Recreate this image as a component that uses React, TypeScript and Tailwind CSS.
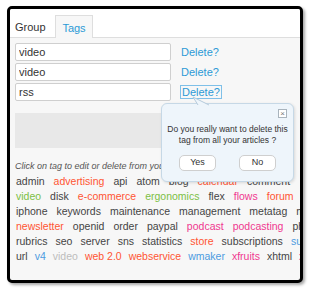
import React from "react";

type Tag = { label: string; color: string };

const G = "#444444";
const O = "#ff5533";
const GR = "#7cbf45";
const P = "#f0388f";
const B = "#4d9be0";
const L = "#bdbdbd";

// row gaps differ a little so the words land where the screenshot has them
const rows: { gap: string; tags: Tag[] }[] = [
    {
        gap: "gap-x-[9px]",
        tags: [
            { label: "admin", color: G },
            { label: "advertising", color: O },
            { label: "api", color: G },
            { label: "atom", color: G },
            { label: "blog", color: G },
            { label: "calendar", color: O },
            { label: "comment", color: G },
        ],
    },
    {
        gap: "gap-x-[9px]",
        tags: [
            { label: "video", color: GR },
            { label: "disk", color: G },
            { label: "e-commerce", color: O },
            { label: "ergonomics", color: GR },
            { label: "flex", color: G },
            { label: "flows", color: P },
            { label: "forum", color: O },
        ],
    },
    {
        gap: "gap-x-[9px]",
        tags: [
            { label: "iphone", color: G },
            { label: "keywords", color: G },
            { label: "maintenance", color: G },
            { label: "management", color: G },
            { label: "metatag", color: G },
            { label: "mobile", color: G },
        ],
    },
    {
        gap: "gap-x-[9px]",
        tags: [
            { label: "newsletter", color: O },
            { label: "openid", color: G },
            { label: "order", color: G },
            { label: "paypal", color: G },
            { label: "podcast", color: P },
            { label: "podcasting", color: P },
            { label: "php", color: G },
        ],
    },
    {
        gap: "gap-x-[8px]",
        tags: [
            { label: "rubrics", color: G },
            { label: "seo", color: G },
            { label: "server", color: G },
            { label: "sns", color: G },
            { label: "statistics", color: G },
            { label: "store", color: O },
            { label: "subscriptions", color: G },
            { label: "support", color: B },
        ],
    },
    {
        gap: "gap-x-[7px]",
        tags: [
            { label: "url", color: G },
            { label: "v4", color: B },
            { label: "video", color: L },
            { label: "web 2.0", color: O },
            { label: "webservice", color: O },
            { label: "wmaker", color: B },
            { label: "xfruits", color: P },
            { label: "xhtml", color: G },
            { label: "xml", color: P },
        ],
    },
];

function TagRow({ left }: { left: string }) {
    return (
        <div className="flex items-center gap-[10px] h-[20px]">
            <input
                readOnly
                defaultValue={left}
                className="w-[156px] h-[18px] bg-white border border-[#cfcfcf] rounded-[2px] pl-[3px] text-[11px] text-[#333] outline-none"
            />
            <span className="text-[11px] text-[#2c9ad6]">Delete?</span>
        </div>
    );
}

export default function App() {
    return (
        <div
            className="w-[310px] h-[291px] bg-white pt-[6px] pl-[7px]"
            style={{ fontFamily: '"Liberation Sans", Arial, sans-serif' }}
        >
            <div className="relative w-[296px] h-[277px] border-[3px] border-black rounded-[5px] overflow-hidden bg-[#f7f7f7] shadow-[2px_2px_3px_rgba(0,0,0,0.35)]">
                {/* tabs */}
                <div className="h-[29px] bg-white flex items-end pl-[5px] border-b border-[#dedede]">
                    <div className="w-[40px] h-[22px] flex items-center pt-[2px] text-[11px] text-[#333]">
                        Group
                    </div>
                    <div className="w-[38px] h-[23px] -mb-px bg-[#f7f7f7] border border-b-0 border-[#dedede] flex items-center justify-center pt-[2px] text-[11px] text-[#2c9ad6]">
                        Tags
                    </div>
                </div>

                <div className="pl-[5px] pt-[4px]">
                    <div className="flex flex-col">
                        <TagRow left="video" />
                        <TagRow left="video" />
                        <div className="flex items-center gap-[9px] h-[20px]">
                            <input
                                readOnly
                                defaultValue="rss"
                                className="w-[156px] h-[18px] bg-white border border-[#cfcfcf] rounded-[2px] pl-[3px] text-[11px] text-[#333] outline-none"
                            />
                            <span className="text-[11px] leading-[12px] text-[#2c9ad6] border border-[#7fc0e8] px-px">
                                Delete?
                            </span>
                        </div>
                    </div>

                    <div className="mt-[11px] w-[276px] h-[35px] bg-[#e8e8e8]" />

                    <p className="mt-[12px] text-[9px] leading-[12px] italic text-[#555] whitespace-nowrap">
                        Click on tag to edit or delete from your articles
                    </p>

                    <div className="mt-[2px] flex flex-col pl-px">
                        {rows.map((row, i) => (
                            <div key={i} className={`flex ${row.gap} whitespace-nowrap text-[10.5px] leading-[15px]`}>
                                {row.tags.map((t) => (
                                    <span key={t.label + i} style={{ color: t.color }}>
                                        {t.label}
                                    </span>
                                ))}
                            </div>
                        ))}
                    </div>
                </div>

                {/* confirm popup */}
                <div className="absolute left-[151px] top-[94px] w-[133px] h-[79px] bg-[#eef5fb] border border-[#c6d8e6] rounded-[6px] shadow-[1px_1px_3px_rgba(0,0,0,0.12)]">
                    <svg className="absolute left-[29px] top-[-8px]" width="20" height="10" viewBox="0 0 20 10">
                        <polygon points="2,1 7,9 18,9" fill="#eef5fb" />
                        <polyline points="7,9 2,1 18,9" fill="none" stroke="#b5cadb" strokeWidth="1" />
                    </svg>
                    <div className="absolute right-[6px] top-[5px] w-[9px] h-[9px] border border-[#a9b4bd] bg-white flex items-center justify-center text-[8px] leading-none text-[#777]">
                        ×
                    </div>
                    <p className="mt-[20px] text-center text-[8.5px] leading-[11px] text-[#333]">
                        Do you really want to delete this
                        <br />
                        tag from all your articles ?
                    </p>
                    <div className="mt-[9px] flex justify-center gap-[23px]">
                        <button className="w-[37px] h-[16px] bg-white border border-[#cfcfcf] rounded-[5px] text-[9px] text-[#333]">
                            Yes
                        </button>
                        <button className="w-[37px] h-[16px] bg-white border border-[#cfcfcf] rounded-[5px] text-[9px] text-[#333]">
                            No
                        </button>
                    </div>
                </div>
            </div>
        </div>
    );
}
